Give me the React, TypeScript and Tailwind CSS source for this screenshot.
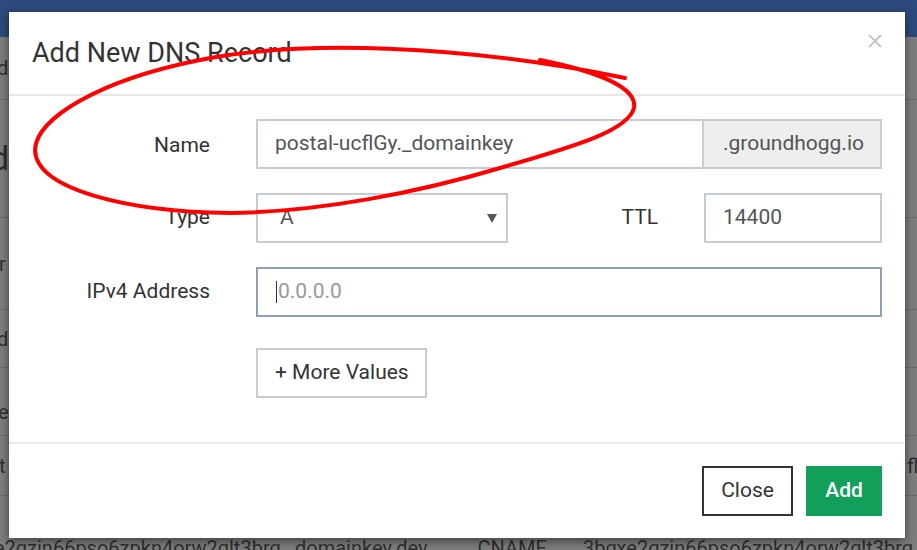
import { X } from 'lucide-react';

const font = { fontFamily: 'Roboto, "Liberation Sans", sans-serif' };

function Backdrop() {
  return (
    <div className="h-[550px] w-[917px] overflow-hidden bg-[#7e7e7e]">
      <div className="h-[37px] bg-[#2e4a7c]" />
      <div className="flex h-[63px] items-center border-b border-[#6c6c6c] text-[20px] text-[#2e2e2e]">
        <span className="-ml-[3px]">d</span>
      </div>
      <div className="flex h-[118px] items-center border-b border-[#6c6c6c] text-[34px] text-[#2e2e2e]">
        <span className="-ml-[10px]">d</span>
      </div>
      <div className="flex h-[92px] items-center border-b border-[#6c6c6c] text-[20px] text-[#2e2e2e]">
        <span className="-ml-[1px]">r</span>
      </div>
      <div className="flex h-[58px] items-center border-b border-[#6c6c6c] text-[20px] text-[#2e2e2e]">
        <span className="-ml-[3px]">d</span>
      </div>
      <div className="flex h-[68px] items-end pb-2 border-b border-[#6c6c6c] text-[20px] text-[#2e2e2e]">
        <span className="-ml-[2px]">e</span>
      </div>
      <div className="flex h-[60px] items-center border-b border-[#6c6c6c] text-[20px] text-[#2e2e2e]">
        <span className="-ml-[1px]">t</span>
        <span className="ml-auto mr-[-20px] w-[30px]">fl</span>
      </div>
      <div className="flex h-[54px] items-end whitespace-nowrap text-[20px] leading-none text-[#2e2e2e]">
        <span className="-ml-[6px] translate-y-[8px]">e2gzin66pso6zpkn4orw2glt3brg._domainkey.dev</span>
        <span className="ml-[50px] translate-y-[8px]">CNAME</span>
        <span className="ml-[36px] translate-y-[8px]">3bgxe2gzin66pso6zpkn4orw2glt3brg</span>
      </div>
    </div>
  );
}

function Annotation() {
  return (
    <svg className="pointer-events-none absolute left-0 top-0" width="917" height="550" viewBox="0 0 917 550">
      <path
        d="M 540 60 C 590 70, 638 86, 634 108 C 628 130, 580 145, 500 168 C 420 192, 320 212, 230 213 C 130 212, 36 190, 35 150 C 36 118, 100 80, 200 60 C 300 40, 460 44, 625 78"
        fill="none"
        stroke="#ff0000"
        strokeWidth={4}
        strokeLinecap="round"
      />
    </svg>
  );
}

export default function App() {
  return (
    <div className="relative h-[550px] w-[917px] overflow-hidden" style={font}>
      <Backdrop />

      {/* Modal */}
      <div className="absolute left-[9px] top-[12px] flex h-[526px] w-[896px] flex-col bg-white shadow-[0_3px_9px_rgba(0,0,0,0.5)]">
        <div className="relative flex h-[84px] items-center border-b-2 border-[#e8e8e8] pl-[23px]">
          <h4 className="text-[27px] text-[#333]">Add New DNS Record</h4>
          <X className="absolute right-[19px] top-[18px] h-[22px] w-[22px] text-[#c6c6c6]" strokeWidth={2.2} />
        </div>

        <div className="flex flex-1 flex-col gap-[24px] px-[23px] pt-[23px] text-[21px]">
          <div className="flex items-center gap-[46px]">
            <label className="mt-[3px] w-[178px] text-right text-[#333]">Name</label>
            <div className="flex h-[50px] w-[626px]">
              <div className="flex flex-1 items-center border-2 border-r-0 border-[#c4ccd9] pl-[17px] text-[#555]">
                postal-ucflGy._domainkey
              </div>
              <div className="flex w-[180px] items-center border-2 border-[#cccccc] bg-[#eeeeee] pl-[19px] text-[#555]">
                .groundhogg.io
              </div>
            </div>
          </div>

          <div className="flex h-[50px] items-center gap-[46px]">
            <label className="w-[178px] text-right text-[#333]">Type</label>
            <div className="flex h-[50px] w-[626px] items-center">
              <div className="flex h-full w-[252px] items-center justify-between border-2 border-[#c4ccd9] pl-[22px] pr-[9px] text-[#555]">
                <span>A</span>
                <svg width="10" height="9" viewBox="0 0 10 9">
                  <path d="M0 0 H10 L5 9 Z" fill="#555" />
                </svg>
              </div>
              <label className="w-[150px] text-right text-[#333]">TTL</label>
              <div className="ml-[46px] flex h-full w-[178px] items-center border-2 border-[#c4ccd9] pl-[17px] text-[#555]">
                14400
              </div>
            </div>
          </div>

          <div className="flex items-center gap-[46px]">
            <label className="w-[178px] text-right text-[#333]">IPv4 Address</label>
            <div className="flex h-[50px] w-[626px] items-center border-2 border-[#909fba] pl-[18px] text-[#999]">
              <span className="mr-[1px] h-[22px] w-px bg-[#333]" />
              0.0.0.0
            </div>
          </div>

          <div className="flex pl-[224px] pt-[7px]">
            <button className="h-[50px] w-[171px] border-2 border-[#cccccc] bg-white pl-[17px] text-left text-[#333]">
              + More Values
            </button>
          </div>
        </div>

        <div className="flex h-[96px] items-start justify-end gap-[13px] border-t-2 border-[#e8e8e8] pr-[23px] pt-[22px] text-[21px]">
          <button className="h-[50px] w-[91px] border-2 border-[#333] bg-white text-[#333]">Close</button>
          <button className="h-[50px] w-[76px] bg-[#13a05b] font-medium text-white">Add</button>
        </div>
      </div>

      <Annotation />
    </div>
  );
}
